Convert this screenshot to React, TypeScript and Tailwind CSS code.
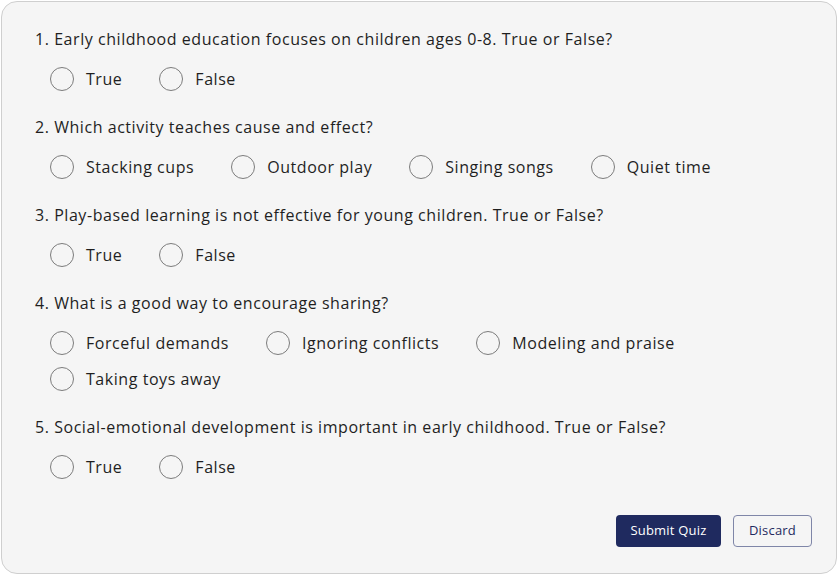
import React from "react";

const questions: { q: string; options: string[] }[] = [
  { q: "1. Early childhood education focuses on children ages 0-8. True or False?", options: ["True", "False"] },
  { q: "2. Which activity teaches cause and effect?", options: ["Stacking cups", "Outdoor play", "Singing songs", "Quiet time"] },
  { q: "3. Play-based learning is not effective for young children. True or False?", options: ["True", "False"] },
  { q: "4. What is a good way to encourage sharing?", options: ["Forceful demands", "Ignoring conflicts", "Modeling and praise", "Taking toys away"] },
  { q: "5. Social-emotional development is important in early childhood. True or False?", options: ["True", "False"] },
];

export default function App() {
  return (
    <div className="w-[838px] h-[575px] bg-white p-px" style={{ fontFamily: '"Open Sans", sans-serif' }}>
      <div className="w-full h-full rounded-[16px] border border-[#cfcfcf] bg-[#f5f5f5] pl-[33px] pr-[24px] pt-[25px] pb-[26px] flex flex-col">
        <div className="flex flex-col gap-6">
          {questions.map((item, i) => (
            <div key={i}>
              <div className="text-[16px] leading-[24px] tracking-[0.55px] text-[#1f1f1f]">{item.q}</div>
              <div className="mt-4 pl-[15px] flex flex-wrap gap-x-[37px] gap-y-3">
                {item.options.map((o) => (
                  <label key={o} className="flex items-center gap-3 h-6">
                    <span className="w-6 h-6 rounded-full border border-[#7c7c7c] bg-[#f5f5f5]" />
                    <span className="text-[16px] leading-[24px] tracking-[0.55px] text-[#1f1f1f]">{o}</span>
                  </label>
                ))}
              </div>
            </div>
          ))}
        </div>
        <div className="mt-auto flex justify-end gap-3">
          <button className="h-8 w-[105px] rounded-[4px] bg-[#1f2a5f] text-white text-[13px] font-medium tracking-[0.2px]">Submit Quiz</button>
          <button className="h-8 w-[79px] rounded-[4px] border border-[#7f86a8] text-[#1f2a5f] text-[13px] font-medium tracking-[0.2px]">Discard</button>
        </div>
      </div>
    </div>
  );
}
